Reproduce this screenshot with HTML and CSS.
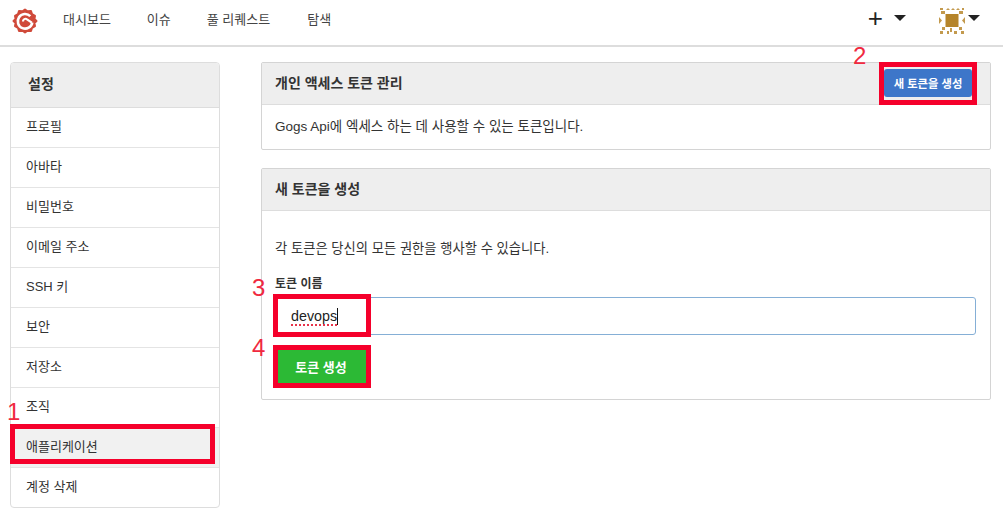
FILE: index.html
```html
<!DOCTYPE html>
<html lang="ko">
<head>
    <meta charset="UTF-8">
    <title>새 토큰을 생성</title>
    <link rel="stylesheet" href="styles.css">
</head>
<body>
    <!-- Top bar -->
    <nav class="navbar">
        <svg class="logo" width="26" height="26" viewBox="0 0 26 26">
            <path d="M13 1.500l2.500 1.800 3.500-.3 1 3 3 1.800-.6 3.200L24.500 13l-2.100 2 .6 3.200-3 1.800-1 3-3.500-.3-2.500 1.800-2.500-1.800-3.500.3-1-3-3-1.800.6-3.200L1.500 13l2.100-2L3 7.800l3-1.800 1-3 3.500.3z" fill="#d04a3a" stroke="#d04a3a" stroke-width="2" stroke-linejoin="round"/>
            <path d="M18.300 8.200a7.300 7.300 0 1 0 2 6.300" fill="none" stroke="#fff" stroke-width="2.600"/>
            <path d="M11 13.500a2.500 2.500 0 0 1 4-2.200l4.800 3.300" fill="none" stroke="#fff" stroke-width="2.200"/>
        </svg>
        <a class="nav-link">대시보드</a>
        <a class="nav-link">이슈</a>
        <a class="nav-link">풀 리퀘스트</a>
        <a class="nav-link">탐색</a>
        <div class="nav-right">
            <span class="plus">+</span>
            <span class="caret"></span>
            <svg class="avatar" width="26" height="27" viewBox="0 0 26 27">
                <rect x="6.500" y="7" width="13" height="13" fill="#b5842a"/>
                <g fill="#c39a4e">
                    <path d="M1 1h3v2H1zM9 1l2 2H7zM14 1l2 2h-4zM19 1l2 2h-4zM23 1h2v2h-2z"/>
                    <path d="M2 4h4v3H2zM20 4h4v3h-4z"/>
                    <path d="M0 10l3 3.500-3 3.500zM26 10l-3 3.500 3 3.500z"/>
                    <path d="M3 20h3v3H3zM11 21h2v4h-2zM20 20h3v3h-3z"/>
                    <path d="M1 24h3v3H1zM8 24h2v3H8zM15 24h3v3h-3zM22 24h3v3h-3z"/>
                </g>
            </svg>
            <span class="caret caret-tight"></span>
        </div>
    </nav>

    <div class="page">
        <!-- Settings menu -->
        <aside class="sidebar">
            <div class="sidebar-title">설정</div>
            <a class="menu-item">프로필</a>
            <a class="menu-item">아바타</a>
            <a class="menu-item">비밀번호</a>
            <a class="menu-item">이메일 주소</a>
            <a class="menu-item">SSH 키</a>
            <a class="menu-item">보안</a>
            <a class="menu-item">저장소</a>
            <a class="menu-item">조직</a>
            <a class="menu-item active">애플리케이션</a>
            <a class="menu-item">계정 삭제</a>
        </aside>

        <main class="content">
            <section class="panel">
                <div class="panel-head">
                    <h4>개인 액세스 토큰 관리</h4>
                    <button class="btn btn-blue">새 토큰을 생성</button>
                </div>
                <div class="panel-body">Gogs Api에 엑세스 하는 데 사용할 수 있는 토큰입니다.</div>
            </section>

            <section class="panel">
                <div class="panel-head">
                    <h4>새 토큰을 생성</h4>
                </div>
                <div class="panel-body form-body">
                    <p class="hint">각 토큰은 당신의 모든 권한을 행사할 수 있습니다.</p>
                    <label class="field-label">토큰 이름</label>
                    <div class="fake-input"><span class="typed">devops</span><span class="cursor"></span></div>
                    <button class="btn btn-green">토큰 생성</button>
                </div>
            </section>
        </main>
    </div>

    <!-- Red annotations drawn on the screenshot -->
    <div class="mark mark-1"></div>
    <div class="mark mark-2"></div>
    <div class="mark mark-3"></div>
    <div class="mark mark-4"></div>
    <span class="num num-1">1</span>
    <span class="num num-2">2</span>
    <span class="num num-3">3</span>
    <span class="num num-4">4</span>
</body>
</html>
```

FILE: styles.css
```css
* {
    box-sizing: border-box;
}
html, body {
    height: 520px;
    overflow: hidden;
}
body {
    margin: 0;
    background-color: #fff;
    color: #333;
    font-family: "Liberation Sans", "Noto Sans CJK KR", sans-serif;
    font-size: 14px;
    position: relative;
}
.navbar {
    display: flex;
    align-items: center;
    height: 47px;
    padding: 0 23px 9px 12px;
    border-bottom: 2px solid #ddd;
}
.logo {
    margin-right: 25px;
    margin-top: 5px;
}
.nav-link {
    margin-right: 36px;
    font-size: 13px;
    color: #444;
}
.nav-link:nth-of-type(3) {
    margin-right: 37px;
}
.nav-right {
    margin-left: auto;
    display: flex;
    align-items: center;
}
.plus {
    font-size: 26px;
    line-height: 24px;
    color: #222;
    margin-right: 11px;
}
.caret {
    width: 0;
    height: 0;
    border-left: 6px solid transparent;
    border-right: 6px solid transparent;
    border-top: 6px solid #222;
    margin-right: 33px;
}
.avatar {
    margin-top: 4px;
}
.caret-tight {
    margin-right: 0;
    margin-left: 3px;
}
.page {
    display: flex;
    align-items: flex-start;
    padding: 15px 12px 0 10px;
    gap: 41px;
}
.sidebar {
    width: 210px;
    flex: none;
    border: 1px solid #ddd;
    border-radius: 4px;
    overflow: hidden;
}
.sidebar-title {
    height: 45px;
    line-height: 42px;
    padding-left: 17px;
    background-color: #eee;
    font-weight: bold;
    border-bottom: 1px solid #ddd;
}
.menu-item {
    display: block;
    height: 40px;
    line-height: 38px;
    padding-left: 15px;
    font-size: 13px;
    border-bottom: 1px solid #e4e4e4;
}
.menu-item:last-child {
    height: 39px;
    border-bottom: none;
}
.menu-item.active {
    background-color: #f1f1f1;
}
.content {
    flex: 1;
    display: flex;
    flex-direction: column;
    gap: 18px;
}
.panel {
    border: 1px solid #d4d4d4;
    border-radius: 2px;
}
.panel-head {
    display: flex;
    align-items: center;
    justify-content: space-between;
    height: 42px;
    padding: 0 18px 0 13px;
    background-color: #eee;
    border-bottom: 1px solid #ddd;
}
.panel-head h4 {
    margin: -3px 0 0;
    font-size: 14px;
    font-weight: bold;
    color: #333;
}
.panel-body {
    height: 44px;
    line-height: 44px;
    padding-left: 13px;
    font-size: 13.500px;
}
.form-body {
    height: 188px;
    line-height: normal;
    padding: 27px 14px 0 13px;
}
.hint {
    margin: 0 0 17px;
    font-size: 13.300px;
}
.field-label {
    display: block;
    font-size: 12px;
    font-weight: bold;
    margin-bottom: 6px;
}
.fake-input {
    display: flex;
    align-items: center;
    height: 38px;
    padding-left: 15px;
    border: 1px solid #85afd6;
    border-radius: 3px;
    margin-bottom: 15px;
}
.typed {
    font-size: 14.300px;
    color: #222;
    text-decoration: underline dotted #e8334a 2px;
    text-underline-offset: 3px;
}
.cursor {
    width: 1px;
    height: 17px;
    background-color: #111;
}
.btn {
    border: none;
    color: #fff;
    font-family: inherit;
    font-weight: bold;
}
.btn-blue {
    width: 88px;
    height: 28px;
    font-size: 11.300px;
    border-radius: 3px;
    background-color: #3d76c9;
    margin-top: -1px;
}
.btn-green {
    display: block;
    width: 92px;
    height: 34px;
    padding-bottom: 3px;
    font-size: 13px;
    background-color: #2cb935;
}
.mark {
    position: absolute;
    border: 5px solid #f5002b;
}
.mark-1 {
    left: 10px;
    top: 424px;
    width: 205px;
    height: 40px;
}
.mark-2 {
    left: 879px;
    top: 62px;
    width: 98px;
    height: 43px;
}
.mark-3 {
    left: 273px;
    top: 294px;
    width: 98px;
    height: 43px;
}
.mark-4 {
    left: 273px;
    top: 345px;
    width: 98px;
    height: 43px;
}
.num {
    position: absolute;
    font-size: 24px;
    line-height: 26px;
    color: #f0293f;
}
.num-1 {
    left: 7px;
    top: 399px;
}
.num-2 {
    left: 853px;
    top: 43px;
}
.num-3 {
    left: 252px;
    top: 275px;
}
.num-4 {
    left: 252px;
    top: 335px;
}
```
